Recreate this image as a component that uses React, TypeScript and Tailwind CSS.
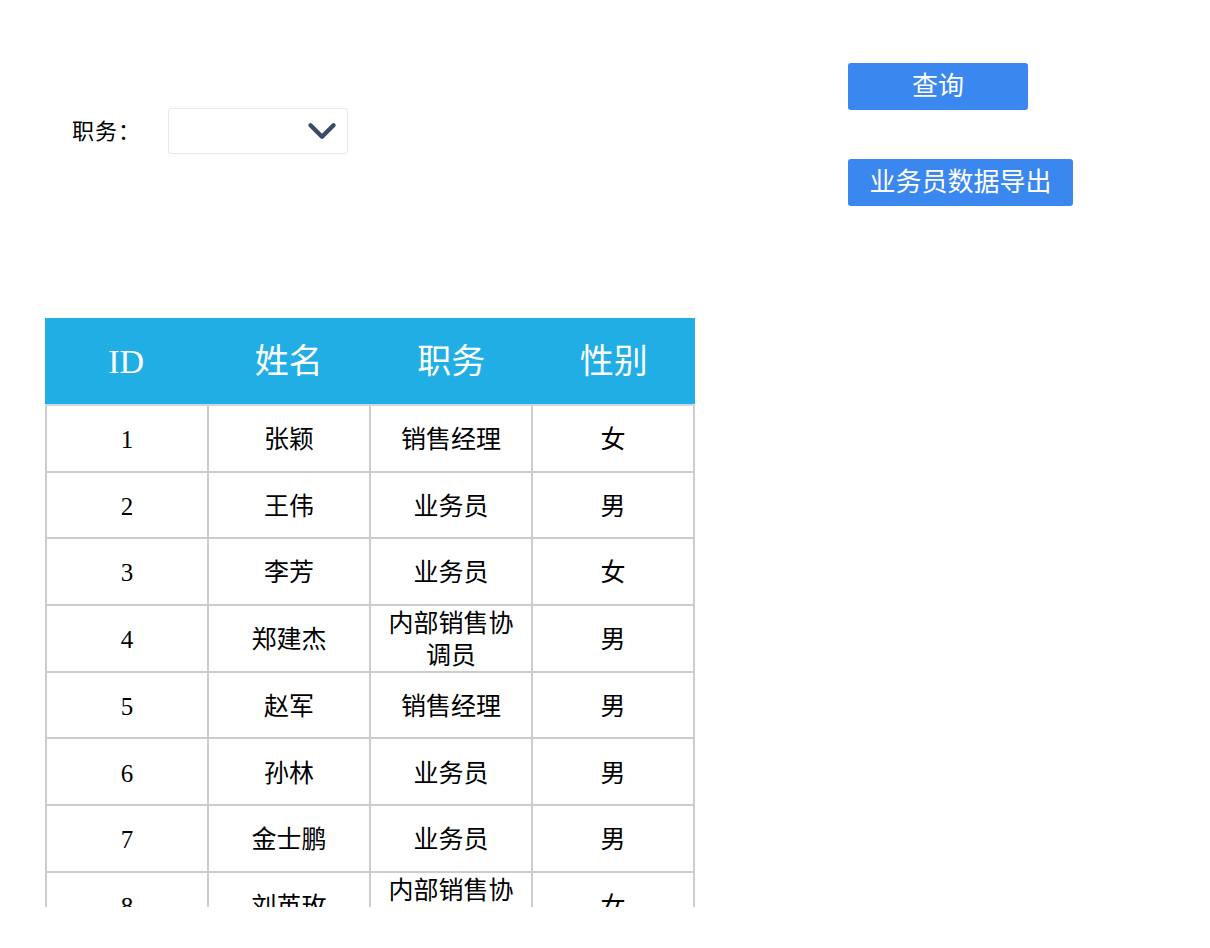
import { ChevronDown } from 'lucide-react';

interface Staff {
  id: number;
  name: string;
  role: string;
  gender: string;
}

const staff: Staff[] = [
  { id: 1, name: '张颖', role: '销售经理', gender: '女' },
  { id: 2, name: '王伟', role: '业务员', gender: '男' },
  { id: 3, name: '李芳', role: '业务员', gender: '女' },
  { id: 4, name: '郑建杰', role: '内部销售协调员', gender: '男' },
  { id: 5, name: '赵军', role: '销售经理', gender: '男' },
  { id: 6, name: '孙林', role: '业务员', gender: '男' },
  { id: 7, name: '金士鹏', role: '业务员', gender: '男' },
  { id: 8, name: '刘英玫', role: '内部销售协调员', gender: '女' },
  { id: 9, name: '张雪眉', role: '业务员', gender: '女' },
];

const serif = "font-['Liberation_Serif','Noto_Sans_CJK_SC',serif]";
const cell = 'flex min-h-0 items-center justify-center border-b-2 border-r-2 border-[#cccccc] pt-[4px]';

export default function App() {
  return (
    <div className="min-h-[948px] w-[1210px] bg-white">
      <div className="flex pt-[63px]">
        <div className="w-[848px] pl-[72px] pt-[45px]">
          <div className="flex items-center">
            <span className={`${serif} w-[96px] text-[22px] tracking-[1px] text-black`}>职务：</span>
            <button
              type="button"
              className="flex h-[46px] w-[180px] items-center justify-end rounded-[3px] border border-[#e6e8eb] bg-white pr-[2px]"
            >
              <ChevronDown size={46} strokeWidth={2.3} className="text-[#3b4a66]" />
            </button>
          </div>
        </div>
        <div className="flex flex-col items-start gap-[49px]">
          <button
            type="button"
            className="h-[47px] w-[180px] rounded-[3px] bg-[#3a87f0] pb-[5px] font-['Noto_Sans_CJK_SC',sans-serif] text-[26px] leading-none text-white"
          >
            查询
          </button>
          <button
            type="button"
            className="h-[47px] w-[225px] rounded-[3px] bg-[#3a87f0] pb-[5px] font-['Noto_Sans_CJK_SC',sans-serif] text-[26px] leading-none text-white"
          >
            业务员数据导出
          </button>
        </div>
      </div>

      <div className="ml-[45px] mt-[112px] h-[589px] w-[650px] overflow-hidden">
        <div className={`${serif} grid h-[88px] grid-cols-4 items-center border-b-2 border-[#cfd8de] bg-[#20aee5] text-center text-[34px] text-white`}>
          <span>ID</span>
          <span>姓名</span>
          <span>职务</span>
          <span>性别</span>
        </div>
        <div className="border-l-2 border-[#cccccc]">
          {staff.map((s) => (
            <div
              key={s.id}
              className={`${serif} grid h-[66.7px] grid-cols-4 grid-rows-[100%] text-center text-[25px] leading-[1.3] text-black`}
            >
              <div className={cell}>{s.id}</div>
              <div className={cell}>{s.name}</div>
              <div className={`${cell} px-[14px]`}>{s.role}</div>
              <div className={cell}>{s.gender}</div>
            </div>
          ))}
        </div>
      </div>
    </div>
  );
}
